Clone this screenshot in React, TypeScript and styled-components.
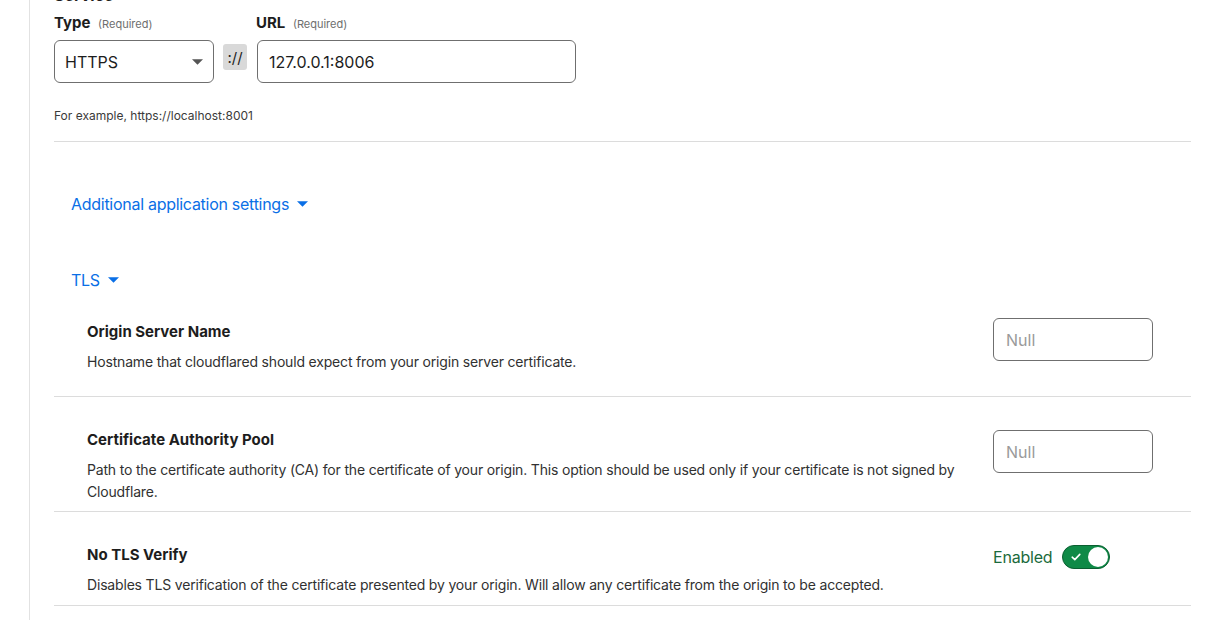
import { createGlobalStyle } from "styled-components";
import styled from "styled-components";

const GlobalStyle = createGlobalStyle`
  html, body {
    margin: 0;
    padding: 0;
    background: #ffffff;
  }
  body {
    font-family: "Inter", "Noto Sans", "Liberation Sans", sans-serif;
    color: #1d1d1d;
    -webkit-font-smoothing: antialiased;
  }
  * {
    box-sizing: border-box;
  }
`;

function App() {
  return (
    <>
      <GlobalStyle />
      <Page>
        <Panel>
          <ServiceLabel>Service</ServiceLabel>
          <LabelRow>
            <FieldLabel $width={202}>
              Type <Required>(Required)</Required>
            </FieldLabel>
            <FieldLabel>
              URL <Required>(Required)</Required>
            </FieldLabel>
          </LabelRow>
          <FieldRow>
            <SelectBox>
              <span>HTTPS</span>
              <Caret viewBox="0 0 10 5" $color="#555555">
                <path d="M0 0h10L5 5z" />
              </Caret>
            </SelectBox>
            <Protocol>://</Protocol>
            <UrlInput defaultValue="127.0.0.1:8006" />
          </FieldRow>
          <Hint>For example, https://localhost:8001</Hint>
          <Divider />

          <Section>
            <Disclosure $gap={51}>
              Additional application settings
              <Caret viewBox="0 0 10 5" $color="#0a6fe6">
                <path d="M0 0h10L5 5z" />
              </Caret>
            </Disclosure>
            <Disclosure $gap={54}>
              TLS
              <Caret viewBox="0 0 10 5" $color="#0a6fe6">
                <path d="M0 0h10L5 5z" />
              </Caret>
            </Disclosure>
          </Section>

          <SettingRow $top={27} $bottom={9}>
            <SettingText>
              <SettingTitle>Origin Server Name</SettingTitle>
              <SettingDesc>
                Hostname that cloudflared should expect from your origin server certificate.
              </SettingDesc>
            </SettingText>
            <SettingControl $offset={0}>
              <TextInput placeholder="Null" />
            </SettingControl>
          </SettingRow>

          <SettingRow $top={29} $bottom={8}>
            <SettingText>
              <SettingTitle>Certificate Authority Pool</SettingTitle>
              <SettingDesc>
                Path to the certificate authority (CA) for the certificate of your origin. This option should be used only if your certificate is not signed by Cloudflare.
              </SettingDesc>
            </SettingText>
            <SettingControl $offset={4}>
              <TextInput placeholder="Null" />
            </SettingControl>
          </SettingRow>

          <SettingRow $top={29} $bottom={9}>
            <SettingText>
              <SettingTitle>No TLS Verify</SettingTitle>
              <SettingDesc>
                Disables TLS verification of the certificate presented by your origin. Will allow any certificate from the origin to be accepted.
              </SettingDesc>
            </SettingText>
            <SettingControl $offset={4}>
              <ToggleWrap>
                <ToggleLabel>Enabled</ToggleLabel>
                <Switch role="switch" aria-checked="true">
                  <svg width="10" height="8" viewBox="0 0 10 8">
                    <path
                      d="M1.2 4.2 3.8 6.6 8.8 1.4"
                      fill="none"
                      stroke="#ffffff"
                      strokeWidth="1.6"
                      strokeLinecap="round"
                      strokeLinejoin="round"
                    />
                  </svg>
                  <Knob />
                </Switch>
              </ToggleWrap>
            </SettingControl>
          </SettingRow>
        </Panel>
      </Page>
    </>
  );
}

export default App;

const Page = styled.div`
  height: 620px;
  overflow: hidden;
  padding-left: 29px;
`;

const Panel = styled.div`
  display: flow-root;
  min-height: 100%;
  border-left: 1px solid #e2e2e2;
  padding: 0 21px 0 24px;
`;

const ServiceLabel = styled.div`
  font-size: 16px;
  font-weight: 700;
  line-height: 20px;
  margin-top: -15px;
  height: 20px;
  color: #1d1d1d;
`;

const LabelRow = styled.div`
  display: flex;
  align-items: baseline;
  height: 20px;
  margin-top: 8px;
`;

const FieldLabel = styled.label<{ $width?: number }>`
  font-size: 15px;
  font-weight: 700;
  line-height: 20px;
  color: #1d1d1d;
  width: ${(p) => (p.$width ? `${p.$width}px` : "auto")};
`;

const Required = styled.span`
  font-size: 11px;
  font-weight: 400;
  color: #6e6e6e;
  margin-left: 4px;
`;

const FieldRow = styled.div`
  display: flex;
  align-items: flex-start;
  margin-top: 7px;
`;

const SelectBox = styled.div`
  width: 160px;
  height: 43px;
  border: 1px solid #6f6f6f;
  border-radius: 6px;
  display: flex;
  align-items: center;
  justify-content: space-between;
  padding: 0 10px 0 10px;
  font-size: 16px;
  color: #1d1d1d;
`;

const Caret = styled.svg<{ $color: string }>`
  width: 11px;
  height: 6px;
  margin-left: 4px;
  fill: ${(p) => p.$color};
  flex-shrink: 0;
`;

const Protocol = styled.div`
  width: 24px;
  height: 26px;
  margin: 4px 10px 0 9px;
  background: #d9d9d9;
  border-radius: 3px;
  display: flex;
  align-items: center;
  justify-content: center;
  font-size: 15px;
  color: #1d1d1d;
`;

const UrlInput = styled.input`
  width: 319px;
  height: 43px;
  border: 1px solid #6f6f6f;
  border-radius: 6px;
  padding: 0 11px;
  font-family: inherit;
  font-size: 16px;
  color: #1d1d1d;
  background: #ffffff;
  outline: none;
`;

const Hint = styled.div`
  font-size: 12px;
  line-height: 16px;
  color: #3a3a3a;
  margin-top: 25px;
`;

const Divider = styled.hr`
  border: 0;
  border-top: 1px solid #dcdcdc;
  margin: 17px 0 0;
`;

const Section = styled.div`
  padding-left: 17px;
`;

const Disclosure = styled.button<{ $gap: number }>`
  display: flex;
  align-items: center;
  gap: 4px;
  margin-top: ${(p) => p.$gap}px;
  padding: 0;
  border: 0;
  background: none;
  font-family: inherit;
  font-size: 16px;
  line-height: 22px;
  letter-spacing: -0.28px;
  color: #0a6fe6;
  cursor: pointer;
`;

const SettingRow = styled.div<{ $top: number; $bottom: number }>`
  display: flex;
  align-items: flex-start;
  gap: 32px;
  padding: ${(p) => p.$top}px 38px ${(p) => p.$bottom}px 33px;
  border-bottom: 1px solid #dcdcdc;
`;

const SettingText = styled.div`
  flex: 1;
  min-width: 0;
  padding-top: 4px;
`;

const SettingTitle = styled.div`
  font-size: 15px;
  font-weight: 700;
  line-height: 20px;
  color: #1d1d1d;
`;

const SettingDesc = styled.div`
  font-size: 14px;
  line-height: 22px;
  letter-spacing: -0.18px;
  color: #313131;
  margin-top: 9px;
`;

const SettingControl = styled.div<{ $offset: number }>`
  width: 160px;
  flex-shrink: 0;
  padding-top: ${(p) => p.$offset}px;
`;

const TextInput = styled.input`
  width: 160px;
  height: 43px;
  border: 1px solid #6f6f6f;
  border-radius: 6px;
  padding: 0 12px;
  margin-bottom: 26px;
  font-family: inherit;
  font-size: 16px;
  color: #1d1d1d;
  background: #ffffff;
  outline: none;
  &::placeholder {
    color: #9a9a9a;
  }
`;

const ToggleWrap = styled.div`
  display: flex;
  align-items: center;
  gap: 10px;
`;

const ToggleLabel = styled.span`
  font-size: 16px;
  letter-spacing: -0.2px;
  color: #1b6b3c;
`;

const Switch = styled.div`
  width: 48px;
  height: 24px;
  border-radius: 12px;
  background: #0f8a47;
  border: 1px solid #0b5f31;
  display: flex;
  align-items: center;
  justify-content: space-between;
  padding: 0 1px 0 8px;
`;

const Knob = styled.span`
  width: 20px;
  height: 20px;
  border-radius: 50%;
  background: #ffffff;
`;
